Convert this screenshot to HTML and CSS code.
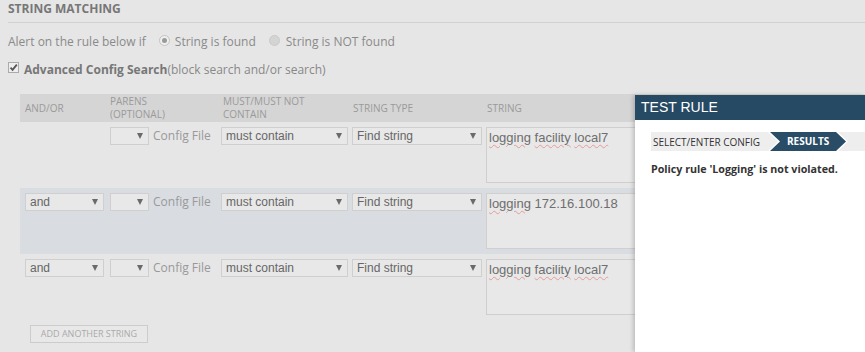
FILE: index.html
```html
<!DOCTYPE html>
<html>
<head>
<meta charset="utf-8">
<link rel="stylesheet" href="styles.css">
</head>
<body>
<div class="section">
  <div class="title">STRING MATCHING</div>
  <div class="alert-row">
    <span>Alert on the rule below if</span>
    <span class="radio checked"><span class="dot"></span></span>
    <span>String is found</span>
    <span class="radio off"></span>
    <span>String is NOT found</span>
  </div>
  <div class="adv-row">
    <span class="checkbox"><svg width="9" height="9" viewBox="0 0 9 9"><path d="M1.5 4.6 L3.6 6.8 L7.8 1.6" fill="none" stroke="#555" stroke-width="1.8"/></svg></span>
    <span class="adv-bold">Advanced Config Search</span><span>(block search and/or search)</span>
  </div>
</div>

<div class="table">
  <div class="thead">
    <div class="h h-andor">AND/OR</div>
    <div class="h h-parens">PARENS<br>(OPTIONAL)</div>
    <div class="h h-must">MUST/MUST NOT<br>CONTAIN</div>
    <div class="h h-type">STRING TYPE</div>
    <div class="h h-string">STRING</div>
  </div>

  <div class="row">
    <div class="spacer-andor"></div>
    <div class="sel sel-parens"><span></span><span class="arr"></span></div>
    <div class="cf">Config File</div>
    <div class="sel sel-must"><span>must contain</span><span class="arr"></span></div>
    <div class="sel sel-type"><span>Find string</span><span class="arr"></span></div>
    <div class="ta"><span class="sp">logging</span> <span class="sp">facility</span> <span class="sp">local7</span></div>
  </div>

  <div class="row hl">
    <div class="sel sel-andor"><span>and</span><span class="arr"></span></div>
    <div class="sel sel-parens"><span></span><span class="arr"></span></div>
    <div class="cf">Config File</div>
    <div class="sel sel-must"><span>must contain</span><span class="arr"></span></div>
    <div class="sel sel-type"><span>Find string</span><span class="arr"></span></div>
    <div class="ta"><span class="sp">logging</span> 172.16.100.18</div>
  </div>

  <div class="row">
    <div class="sel sel-andor"><span>and</span><span class="arr"></span></div>
    <div class="sel sel-parens"><span></span><span class="arr"></span></div>
    <div class="cf">Config File</div>
    <div class="sel sel-must"><span>must contain</span><span class="arr"></span></div>
    <div class="sel sel-type"><span>Find string</span><span class="arr"></span></div>
    <div class="ta"><span class="sp">logging</span> <span class="sp">facility</span> <span class="sp">local7</span></div>
  </div>

  <div class="btn-wrap"><div class="btn">ADD ANOTHER STRING</div></div>
</div>

<div class="panel">
  <div class="panel-head">TEST RULE</div>
  <div class="panel-body">
    <div class="crumbs">
      <div class="step1">SELECT/ENTER CONFIG</div>
      <div class="step2"><div class="step2-in">RESULTS</div></div>
    </div>
    <div class="msg">Policy rule 'Logging' is not violated.</div>
  </div>
</div>
</body>
</html>
```

FILE: styles.css
```css
html, body {
  margin: 0;
  padding: 0;
}
body {
  background: #e6e6e6;
  font-family: "Open Sans", "Liberation Sans", sans-serif;
  color: #888;
  width: 865px;
  height: 352px;
  overflow: hidden;
  position: relative;
}
.section {
  padding-left: 8px;
}
.title {
  height: 23px;
  box-sizing: border-box;
  padding-top: 1px;
  line-height: 16px;
  font-size: 12px;
  font-weight: 700;
  color: #777;
  border-bottom: 1px solid #d2d2d2;
}
.alert-row {
  margin-top: 8px;
  height: 20px;
  display: flex;
  align-items: center;
  font-size: 12px;
  color: #8a8a8a;
}
.radio {
  width: 11px;
  height: 11px;
  box-sizing: border-box;
  border-radius: 50%;
  display: inline-flex;
  align-items: center;
  justify-content: center;
  margin-right: 5px;
  margin-top: -2px;
}
.radio.checked {
  margin-left: 13px;
  background: #efefef;
  border: 1px solid #c4c4c4;
}
.radio.checked .dot {
  width: 5px;
  height: 5px;
  border-radius: 50%;
  background: #9a9a9a;
}
.radio.off {
  margin-left: 13px;
  margin-right: 6px;
  background: #d4d4d4;
  border: 1px solid #cacaca;
}
.adv-row {
  margin-top: 8px;
  height: 20px;
  display: flex;
  align-items: center;
  font-size: 12px;
  color: #888;
}
.checkbox {
  width: 11px;
  height: 11px;
  box-sizing: border-box;
  background: #eeeeee;
  border: 1px solid #ababab;
  display: inline-flex;
  align-items: center;
  justify-content: center;
  margin-right: 5px;
  margin-top: -4px;
}
.adv-bold {
  font-weight: 700;
  color: #777;
}
.table {
  margin-top: 15px;
  margin-left: 20px;
}
.thead {
  height: 28px;
  background: #d5d5d5;
  display: flex;
  align-items: center;
  padding-left: 5px;
  font-size: 10px;
  line-height: 13px;
  color: #9a9a9a;
}
.h-andor { width: 85px; }
.h-parens { width: 113px; }
.h-must { width: 130px; }
.h-type { width: 134px; }
.h-string { flex: 1; }
.row {
  height: 66px;
  box-sizing: border-box;
  padding: 5px 0 0 5px;
  display: flex;
  align-items: flex-start;
}
.row.hl {
  background: #d9dde2;
}
.spacer-andor {
  width: 79px;
  margin-right: 6px;
  flex: none;
}
.sel {
  height: 18px;
  box-sizing: border-box;
  border: 1px solid #cfcfcf;
  background: #e8e8e8;
  display: flex;
  align-items: center;
  justify-content: space-between;
  padding: 0 5px 0 4px;
  font-family: "Liberation Sans", Arial, sans-serif;
  font-size: 12px;
  color: #666;
  flex: none;
}
.arr {
  width: 0;
  height: 0;
  border-left: 3px solid transparent;
  border-right: 3px solid transparent;
  border-top: 6px solid #6a6a6a;
}
.sel-andor { width: 79px; margin-right: 6px; }
.sel-parens { width: 39px; margin-right: 4px; }
.cf {
  width: 68px;
  flex: none;
  font-size: 12px;
  line-height: 18px;
  color: #999;
}
.sel-must { width: 127px; margin-right: 4px; }
.sel-type { width: 130px; margin-right: 4px; }
.ta {
  width: 170px;
  height: 56px;
  box-sizing: border-box;
  border: 1px solid #cfcfcf;
  background: #e8e8e8;
  padding: 2px 2px;
  font-family: "Liberation Sans", Arial, sans-serif;
  font-size: 13px;
  line-height: 16px;
  color: #6e6e6e;
  white-space: nowrap;
  flex: none;
}
.sp {
  text-decoration: underline wavy #e59a9a;
  text-decoration-thickness: 1px;
  text-underline-offset: 2px;
}
.btn-wrap {
  padding: 5px 0 0 10px;
}
.btn {
  width: 118px;
  height: 18px;
  box-sizing: border-box;
  border: 1px solid #cccccc;
  background: #e8e8e8;
  font-size: 9px;
  line-height: 16px;
  text-align: center;
  color: #aaa;
}
.panel {
  position: absolute;
  left: 635px;
  top: 95px;
  width: 230px;
  bottom: 0;
  background: #ffffff;
  box-shadow: -2px 0 4px rgba(0, 0, 0, 0.18);
}
.panel-head {
  height: 25px;
  background: #264a63;
  color: #ffffff;
  font-family: "Liberation Sans", Arial, sans-serif;
  font-size: 14px;
  line-height: 25px;
  padding-left: 6px;
}
.panel-body {
  padding: 12px 0 0 16px;
}
.crumbs {
  height: 19px;
  background: #eeeeee;
  display: flex;
  align-items: center;
}
.step1 {
  width: 117px;
  box-sizing: border-box;
  padding-left: 2px;
  font-size: 10px;
  color: #333;
  flex: none;
}
.step2 {
  width: 80px;
  height: 19px;
  box-sizing: border-box;
  padding: 0 2px;
  background: #ffffff;
  flex: none;
  clip-path: polygon(0 0, calc(100% - 10px) 0, 100% 50%, calc(100% - 10px) 100%, 0 100%, 10px 50%);
}
.step2-in {
  height: 19px;
  background: #2a4d67;
  color: #fff;
  font-size: 10px;
  font-weight: 700;
  line-height: 19px;
  padding-left: 17px;
  clip-path: polygon(0 0, calc(100% - 10px) 0, 100% 50%, calc(100% - 10px) 100%, 0 100%, 10px 50%);
}
.msg {
  margin-top: 10px;
  font-size: 10.7px;
  font-weight: 700;
  line-height: 16px;
  color: #333;
}
```
